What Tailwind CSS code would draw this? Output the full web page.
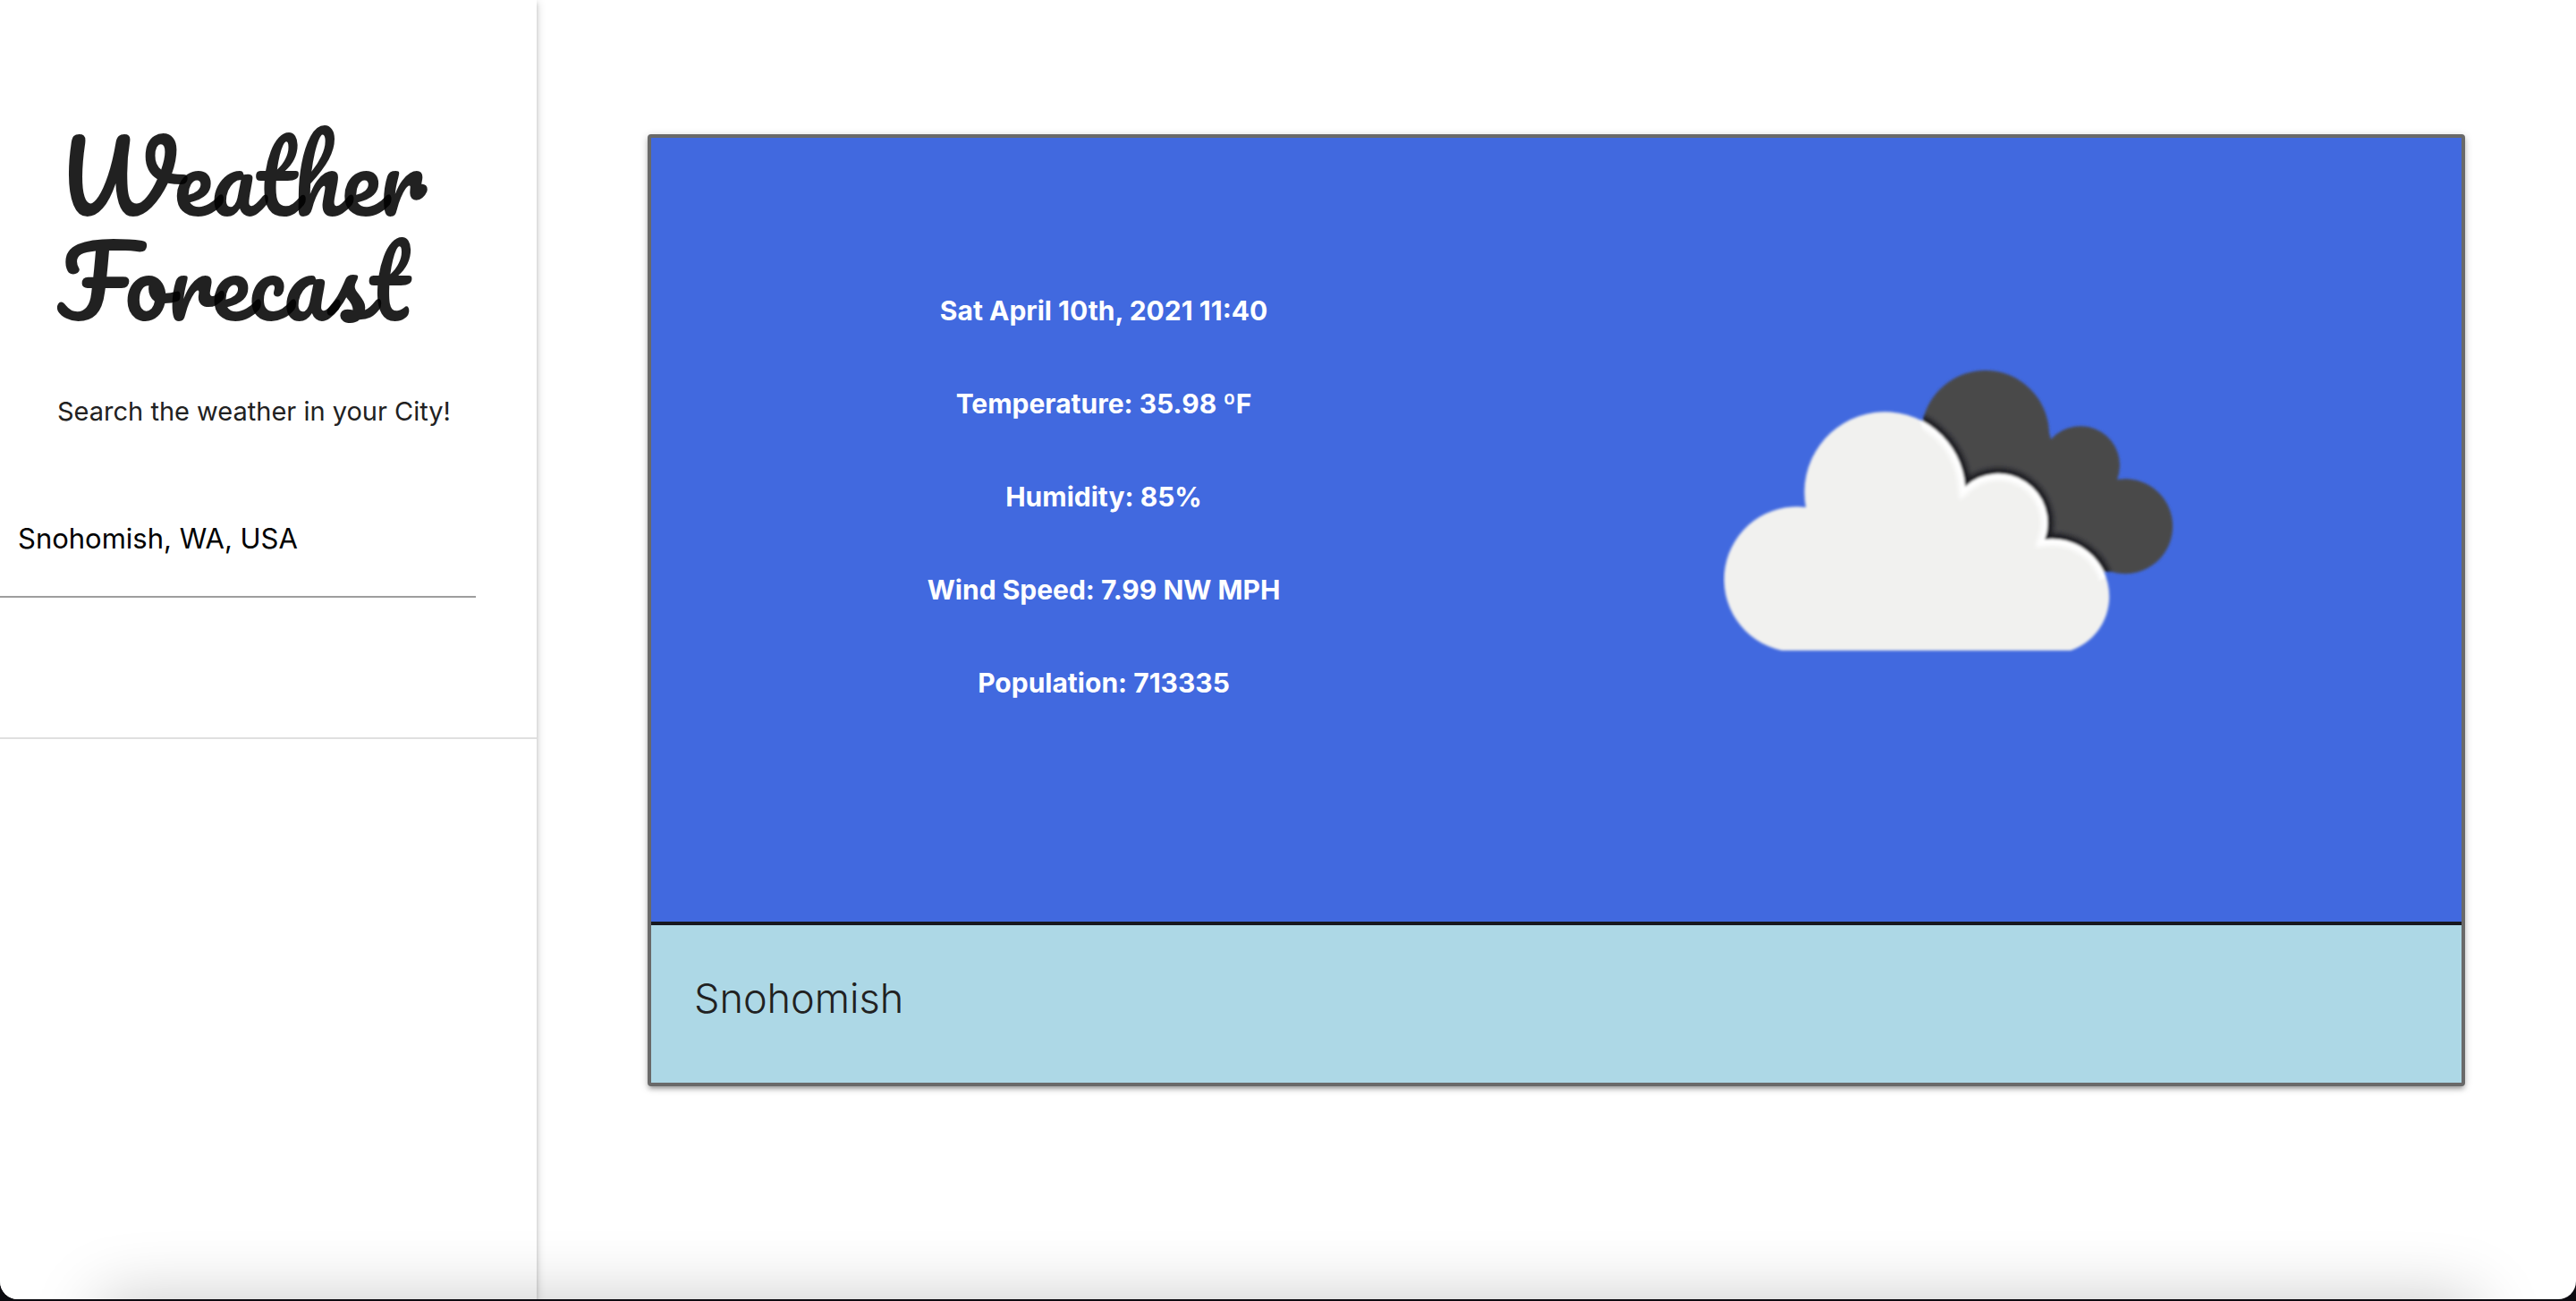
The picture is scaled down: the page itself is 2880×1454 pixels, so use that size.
<!DOCTYPE html>
<html lang="en">
<head>
<meta charset="utf-8">
<title>Weather Forecast</title>
<script src="https://cdn.jsdelivr.net/npm/@tailwindcss/browser@4"></script>
</head>
<body class="bg-[#0c0b10] font-['Inter',sans-serif] text-[#212121]">
<div class="relative flex min-h-[calc(100vh-2px)] overflow-hidden rounded-b-[20px] bg-white">
  <aside class="w-[600px] shrink-0 bg-white shadow-[0_4px_4px_rgba(0,0,0,0.14),0_2px_10px_rgba(0,0,0,0.2)]">
    <div class="border-b-2 border-[#e0e0e0] pt-[137px] pb-[156px]">
      <h1 class="px-16 font-['Pacifico','Lato',cursive] text-[107px] leading-[117px] font-normal text-black/87">Weather<br>Forecast</h1>
      <p class="mt-[65px] px-16 text-[29px] leading-[48px] whitespace-nowrap"><label for="city">Search the weather in your City!</label></p>
      <input id="city" type="text" value="Snohomish, WA, USA" class="mt-[52px] block h-[132px] w-[532px] border-b-2 border-[#9e9e9e] px-5 text-[31px] text-black outline-none">
    </div>
  </aside>
  <main class="flex-1 px-[124px] py-[150px]">
    <section class="overflow-hidden rounded-sm border-4 border-[#696969] bg-[#4169df] shadow-[0_4px_4px_rgba(0,0,0,0.14),0_6px_2px_-4px_rgba(0,0,0,0.12),0_2px_10px_rgba(0,0,0,0.2)]">
      <div class="grid grid-cols-2 border-b-4 border-[#16181f]">
        <div class="flex flex-col gap-14 pt-[169px] pb-[243px] text-center text-[30px] leading-[48px] font-bold text-white">
          <p>Sat April 10th, 2021 11:40</p>
          <p>Temperature: 35.98 ºF</p>
          <p>Humidity: 85%</p>
          <p>Wind Speed: 7.99 NW MPH</p>
          <p>Population: 713335</p>
        </div>
        <div class="flex items-center justify-center">
          <svg class="size-[640px]" viewBox="26 -118 640 640" role="img" aria-label="Broken clouds">
            <defs>
              <path id="front" d="M92 337A81.2 81.2 0 0 1 119 177A89.9 89.9 0 1 1 297 154A55 55 0 0 1 386 213A64 64 0 0 1 415 337Z"/>
              <path id="back" d="M248 97A71.5 71.5 0 0 1 391 94L393 101A44 44 0 0 1 467 146A53 53 0 1 1 461 249L300 249Z"/>
              <clipPath id="frontClip"><use href="#front"/></clipPath>
              <clipPath id="backClip"><use href="#back"/></clipPath>
              <clipPath id="seam"><path d="M245 74L300 40H480V254H456L380 300L280 200Z"/></clipPath>
              <filter id="soft"><feGaussianBlur stdDeviation="2"/></filter>
              <filter id="edge"><feGaussianBlur stdDeviation="1.6"/></filter>
            </defs>
            <g filter="url(#edge)">
              <use href="#back" fill="#48484a"/>
              <g clip-path="url(#backClip)"><use href="#front" fill="none" stroke="#1d1e20" stroke-width="13" filter="url(#soft)"/></g>
              <use href="#front" fill="#f1f1ef"/>
              <g clip-path="url(#seam)"><g clip-path="url(#frontClip)"><use href="#front" fill="none" stroke="#fff" stroke-width="14" filter="url(#soft)"/></g></g>
            </g>
          </svg>
        </div>
      </div>
      <div class="bg-[#add8e6] px-12 pt-[54px] pb-[66px]">
        <h2 class="text-[45px] leading-[56px] font-light">Snohomish</h2>
      </div>
    </section>
  </main>
  <div class="pointer-events-none absolute inset-x-28 top-full h-24 shadow-[0_0_76px_rgba(0,0,0,0.22)]"></div>
</div>
</body>
</html>
